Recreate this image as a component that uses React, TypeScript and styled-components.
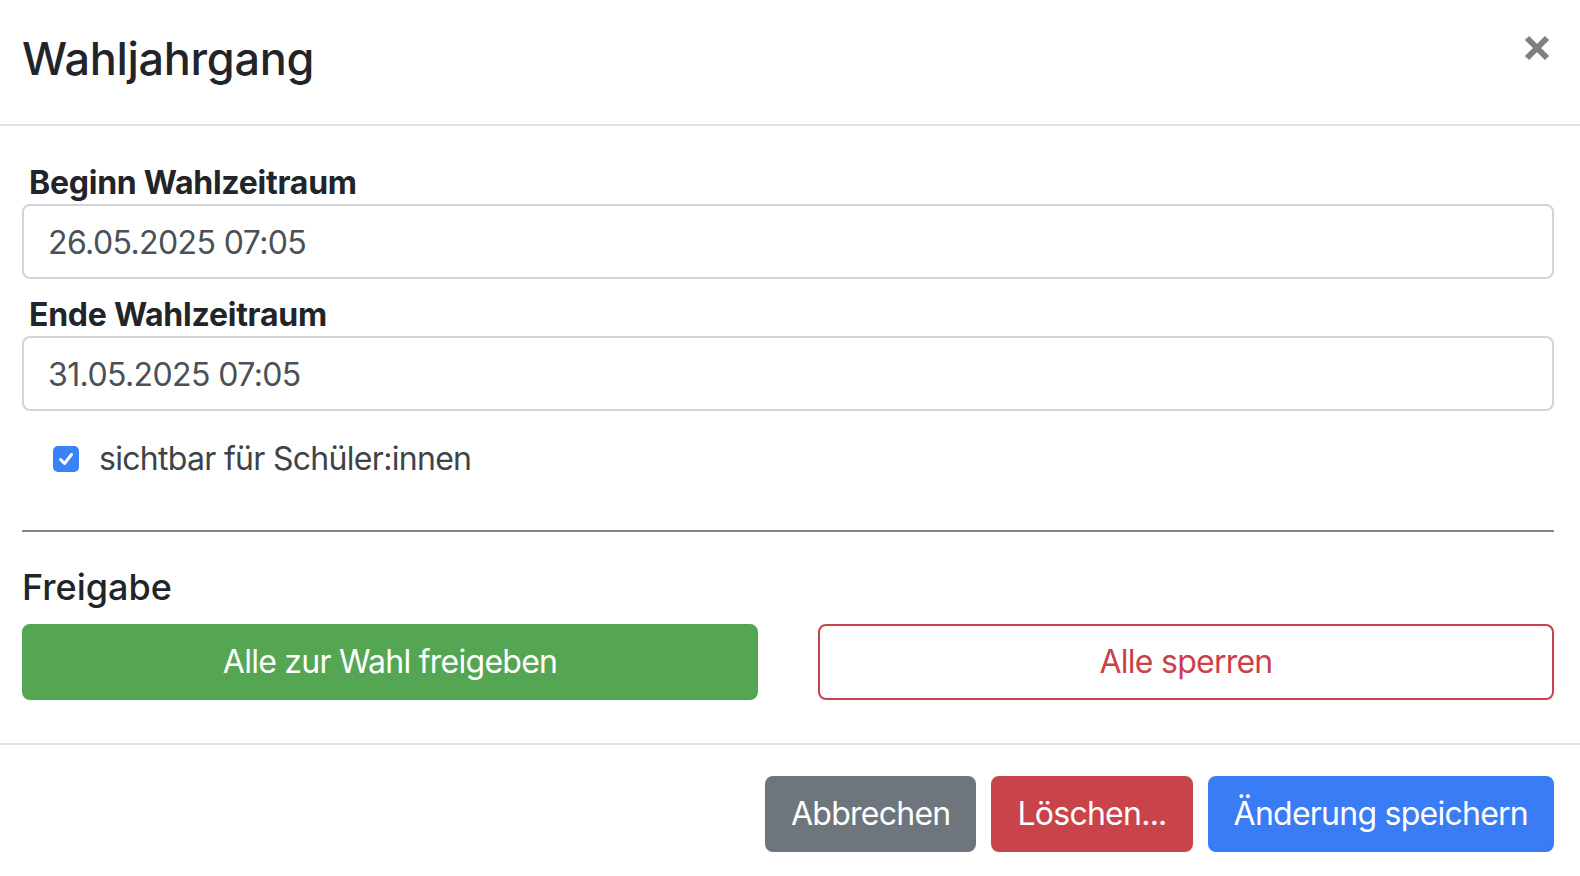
import React from 'react'
import styled, { createGlobalStyle } from 'styled-components'

const GlobalStyle = createGlobalStyle`
  html, body {
    margin: 0;
    padding: 0;
    background: #fff;
    overflow: hidden;
  }
  body {
    font-family: Inter, 'Liberation Sans', Arial, sans-serif;
    color: #212529;
  }
  * { box-sizing: border-box; }
`

const Modal = styled.div`
  width: 1580px;
  height: 876px;
  background: #fff;
`

const Header = styled.header`
  display: flex;
  justify-content: space-between;
  align-items: flex-start;
  padding: 29px 30px 35px 22px;
  border-bottom: 2px solid #dee2e6;
`

const Title = styled.h5`
  margin: 0;
  font-size: 45px;
  line-height: 60px;
  font-weight: 500;
  letter-spacing: -0.3px;
  color: #212529;
`

const CloseButton = styled.button`
  border: 0;
  background: none;
  padding: 0;
  margin-top: 6px;
  width: 26px;
  height: 26px;
  cursor: pointer;
  display: flex;
`

const Body = styled.div`
  padding: 30px 26px 43px 22px;
`

const FieldLabel = styled.label<{ $first?: boolean }>`
  display: block;
  margin: ${(p) => (p.$first ? '0' : '9px')} 0 0 7px;
  padding-top: 6px;
  font-size: 32px;
  line-height: 42px;
  font-weight: 700;
  letter-spacing: -0.25px;
  color: #212529;
`

const TextInput = styled.input`
  display: block;
  width: 100%;
  height: 75px;
  padding: 2px 24px 0;
  border: 2px solid #ced4da;
  border-radius: 8px;
  font-family: inherit;
  font-size: 32px;
  letter-spacing: -0.6px;
  color: #495057;
  background: #fff;
  outline: none;
`

const CheckRow = styled.label`
  display: flex;
  align-items: center;
  gap: 20px;
  margin-top: 24px;
  padding-left: 31px;
  font-size: 32px;
  line-height: 48px;
  letter-spacing: -0.7px;
  color: #3e4347;
`

const CheckBox = styled.span`
  width: 26px;
  height: 26px;
  border-radius: 5px;
  background: #3b82f6;
  display: flex;
  align-items: center;
  justify-content: center;
`

const Rule = styled.hr`
  margin: 47px 0 0;
  border: 0;
  border-top: 2px solid #858585;
`

const SectionTitle = styled.h5`
  margin: 31px 0 13px;
  font-size: 36px;
  line-height: 48px;
  font-weight: 500;
  color: #212529;
`

const ButtonGrid = styled.div`
  display: grid;
  grid-template-columns: 1fr 1fr;
  column-gap: 60px;
`

type Variant = 'success' | 'outline-danger' | 'secondary' | 'danger' | 'primary'

const variants: Record<Variant, string> = {
  success: 'background: #54a653; border-color: #54a653; color: #fff;',
  'outline-danger': 'background: #fff; border-color: #c9424a; color: #c9424a;',
  secondary: 'background: #6e757d; border-color: #6e757d; color: #fff;',
  danger: 'background: #c9434b; border-color: #c9434b; color: #fff;',
  primary: 'background: #397cf6; border-color: #397cf6; color: #fff;',
}

const Button = styled.button<{ $variant: Variant }>`
  font-family: inherit;
  font-size: 32px;
  line-height: 48px;
  font-weight: 400;
  letter-spacing: -0.75px;
  padding: 12px 24px;
  border-radius: 8px;
  border: 2px solid transparent;
  cursor: pointer;
  white-space: nowrap;
  ${(p) => variants[p.$variant]}
`

const Footer = styled.footer`
  display: flex;
  justify-content: flex-end;
  gap: 15px;
  padding: 31px 26px 32px 22px;
  border-top: 2px solid #dee2e6;
`

export default function App() {
  return (
    <>
      <GlobalStyle />
      <Modal>
        <Header>
          <Title>Wahljahrgang</Title>
          <CloseButton aria-label='Schließen'>
            <svg width='26' height='26' viewBox='0 0 26 26'>
              <path d='M3 3 L23 23 M23 3 L3 23' stroke='#808080' strokeWidth='6' />
            </svg>
          </CloseButton>
        </Header>

        <Body>
          <FieldLabel $first>Beginn Wahlzeitraum</FieldLabel>
          <TextInput defaultValue='26.05.2025 07:05' />
          <FieldLabel>Ende Wahlzeitraum</FieldLabel>
          <TextInput defaultValue='31.05.2025 07:05' />

          <CheckRow>
            <CheckBox>
              <svg width='18' height='18' viewBox='0 0 18 18'>
                <path d='M3.5 9.5 L7.5 13.5 L14.5 4.5' fill='none' stroke='#fff' strokeWidth='3' strokeLinecap='round' strokeLinejoin='round' />
              </svg>
            </CheckBox>
            sichtbar für Schüler:innen
          </CheckRow>

          <Rule />

          <SectionTitle>Freigabe</SectionTitle>
          <ButtonGrid>
            <Button $variant='success'>Alle zur Wahl freigeben</Button>
            <Button $variant='outline-danger'>Alle sperren</Button>
          </ButtonGrid>
        </Body>

        <Footer>
          <Button $variant='secondary'>Abbrechen</Button>
          <Button $variant='danger'>Löschen...</Button>
          <Button $variant='primary'>Änderung speichern</Button>
        </Footer>
      </Modal>
    </>
  )
}
